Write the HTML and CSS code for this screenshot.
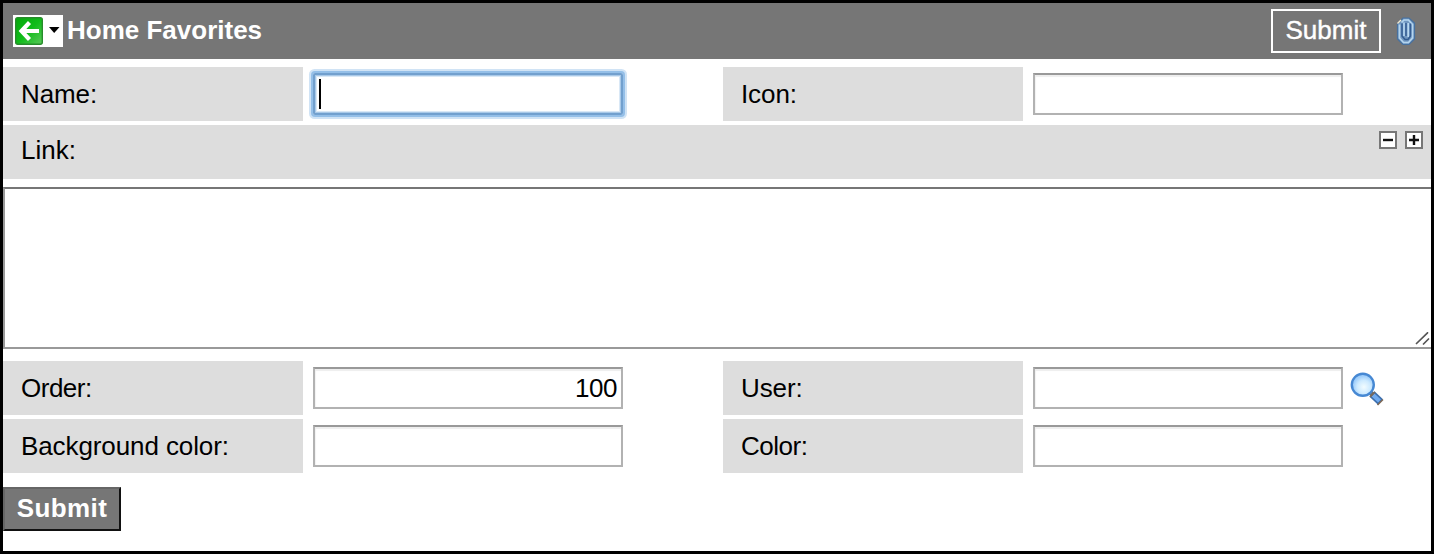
FILE: index.html
```html
<!DOCTYPE html>
<html lang="en">
<head>
<meta charset="utf-8">
<title>Home Favorites</title>
<link rel="stylesheet" href="styles.css">
</head>
<body>
<main class="frame">
  <header class="bar">
    <div class="back">
      <svg width="50" height="32" viewBox="0 0 50 32">
        <defs><linearGradient id="green" x1="0" y1="0" x2="1" y2="1"><stop offset="0" stop-color="#04a80b"/><stop offset=".5" stop-color="#10bc1a"/><stop offset="1" stop-color="#5cc95c"/></linearGradient></defs>
        <rect x="2.700" y="2.700" width="26.600" height="26.600" rx="2" fill="url(#green)" stroke="#278d2b" stroke-width="1.400"/>
        <path d="M16.500 7.500L8.500 16l8 8.500M8 16h18" fill="none" stroke="#fff" stroke-width="4.200"/>
        <path d="M36 12h10.500L41.200 18z" fill="#000"/>
      </svg>
    </div>
    <h1 class="title">Home Favorites</h1>
    <button class="top-submit">Submit</button>
    <svg class="clip" width="20" height="30" viewBox="0 0 20 30">
      <path d="M1.500 23V8L7 2h6l5.500 5v16L13 28.500H7z" fill="#7197c0" stroke="#47719f" stroke-width="1.200"/>
      <path d="M3.500 8.500v13.500l4 4.500h5l4-4.500V8.500l-4-4.500H8L5.500 6.500" fill="none" stroke="#b4d5ee" stroke-width="1.700"/>
      <path d="M6 7.500v12.500l3 3.500h3l2.500-3.500V7.500M10 7v13" fill="none" stroke="#345d92" stroke-width="1.500"/>
      <path d="M8 6.500V20M12.200 7v14" fill="none" stroke="#b9d9f2" stroke-width="1.600"/>
      <path d="M1.500 7.500L5 4" stroke="#efe8cf" stroke-width="1.500"/>
    </svg>
  </header>

  <section class="row first">
    <div class="label">Name:</div>
    <div class="cell"><div class="field focused"><span class="caret"></span></div></div>
    <div class="label">Icon:</div>
    <div class="cell"><div class="field"></div></div>
  </section>

  <section class="link-row">
    <span>Link:</span>
    <div class="sizers">
      <svg width="18" height="18" viewBox="0 0 18 18"><rect x="1" y="1" width="16" height="16" fill="#fff" stroke="#777" stroke-width="2"/><path d="M4 9h10" stroke="#111" stroke-width="2.400"/></svg>
      <svg width="18" height="18" viewBox="0 0 18 18"><rect x="1" y="1" width="16" height="16" fill="#fff" stroke="#777" stroke-width="2"/><path d="M4 9h10M9 4v10" stroke="#111" stroke-width="2.400"/></svg>
    </div>
  </section>

  <div class="textarea">
    <svg width="16" height="14" viewBox="0 0 16 14"><path d="M1.500 11.500L12.500 .800M8.500 12l5-5" fill="none" stroke="#555" stroke-width="1.700" stroke-linecap="round"/></svg>
  </div>

  <section class="row second">
    <div class="label tight">Order:</div>
    <div class="cell"><div class="field number">100</div></div>
    <div class="label">User:</div>
    <div class="cell"><div class="field"></div>
      <svg class="lookup" width="34" height="34" viewBox="0 0 34 34">
        <defs><radialGradient id="lens" cx=".55" cy=".6"><stop offset="0" stop-color="#f2fcff"/><stop offset=".6" stop-color="#cdeaff"/><stop offset="1" stop-color="#9dcdfb"/></radialGradient></defs>
        <path d="M20.500 20.500l3 3" stroke="#7d6c5c" stroke-width="5"/>
        <path d="M22 22l8.500 8" stroke="#3c6fae" stroke-width="7.400"/>
        <path d="M23 23l6.500 6" stroke="#70aaf0" stroke-width="4.200"/>
        <path d="M20 25l5-5M27.500 33l5.500-5.500" stroke="#7c6957" stroke-width="1.600"/>
        <circle cx="12.800" cy="12.800" r="11" fill="url(#lens)" stroke="#4688d3" stroke-width="2.400"/>
      </svg>
    </div>
  </section>

  <section class="row third">
    <div class="label">Background color:</div>
    <div class="cell"><div class="field"></div></div>
    <div class="label tight">Color:</div>
    <div class="cell"><div class="field"></div></div>
  </section>

  <button class="submit">Submit</button>
</main>
</body>
</html>
```

FILE: styles.css
```css
* { box-sizing: border-box; }
body {
  margin: 0;
  background: #fff;
  color: #000;
  font: 26px/30px "Liberation Sans", Arial, sans-serif;
}
svg { display: block; flex: none; }
.frame {
  width: 1434px;
  height: 554px;
  border: 3px solid #000;
  overflow: hidden;
}
.bar {
  display: flex;
  align-items: center;
  height: 56px;
  padding: 0 15px 0 10px;
  background: #767676;
  color: #fff;
}
.back { background: #fff; }
.title {
  margin: 0 auto 2px 4px;
  font-size: 26px;
  line-height: 30px;
}
.top-submit {
  width: 110px;
  height: 44px;
  margin-right: 15px;
  padding: 0 0 2px;
  border: 2px solid #fff;
  background: transparent;
  color: #fff;
  font: inherit;
  -webkit-text-stroke: 0.4px #fff;
}
.row {
  display: grid;
  grid-template-columns: 300px 420px 300px 1fr;
  height: 54px;
}
.first { margin-top: 8px; }
.second { margin-top: 12px; }
.third { margin-top: 4px; }
.label {
  padding: 12px 18px;
  background: #ddd;
  letter-spacing: -0.1px;
}
.tight { letter-spacing: -0.5px; }
.cell {
  display: flex;
  align-items: center;
  padding-left: 10px;
}
.field {
  width: 310px;
  height: 42px;
  padding: 4px;
  border: 2px solid #b2b2b2;
  border-top-color: #999;
  box-shadow: inset 0 2px 1px #eee, inset 1px 0 1px #f2f2f2;
}
.focused {
  border-color: #72a0ce;
  border-radius: 2px;
  box-shadow: 0 0 0 2px #94bfe8, 0 0 0 4px #d0e3f5, inset 0 0 0 1px #a9c9e8, inset 0 0 0 2px #d9e8f6;
}
.caret {
  display: block;
  width: 2px;
  height: 30px;
  background: #000;
}
.number {
  text-align: right;
  letter-spacing: -0.5px;
}
.link-row {
  display: flex;
  justify-content: space-between;
  height: 54px;
  margin-top: 4px;
  padding: 10px 8px 0 18px;
  background: #ddd;
}
.sizers {
  display: flex;
  gap: 8px;
  margin-top: -4px;
}
.textarea {
  display: flex;
  align-items: flex-end;
  justify-content: flex-end;
  height: 162px;
  margin-top: 8px;
  padding-bottom: 1px;
  border: 2px solid #999;
  border-top-color: #767676;
  border-right: 0;
}
.lookup { margin: 2px 0 0 7px; }
.submit {
  display: block;
  width: 118px;
  height: 44px;
  margin-top: 14px;
  padding: 0 0 2px;
  border: 2px solid;
  border-color: #666 #111 #111 #666;
  background: #767676;
  color: #fff;
  font: bold 26px/30px "Liberation Sans", Arial, sans-serif;
  letter-spacing: 0.4px;
}
```
